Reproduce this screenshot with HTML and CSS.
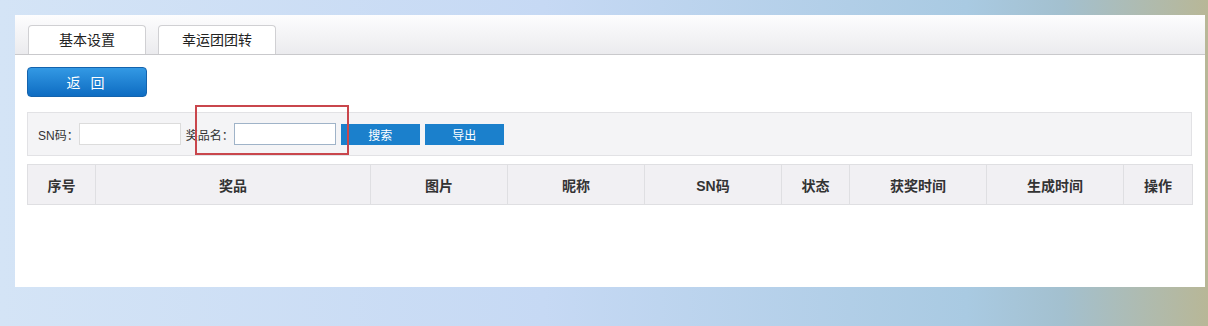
FILE: index.html
```html
<!DOCTYPE html>
<html lang="zh-CN">
<head>
    <meta charset="UTF-8">
    <meta name="viewport" content="width=device-width, initial-scale=1.0">
    <title>奖品列表</title>
    <link rel="stylesheet" href="styles.css">
</head>
<body>
    <div class="panel">
        <div class="tab-bar">
            <div class="tab">基本设置</div>
            <div class="tab">幸运团团转</div>
        </div>

        <div class="content">
            <button class="back-btn">返 回</button>

            <div class="search-bar">
                <label class="field-label">SN码：</label>
                <input class="field" type="text">
                <label class="field-label">奖品名：</label>
                <input class="field field-focus" type="text">
                <button class="small-btn">搜索</button>
                <button class="small-btn">导出</button>
                <div class="highlight"></div>
            </div>

            <table class="prize-table">
                <colgroup>
                    <col class="col-s">
                    <col class="col-xl">
                    <col class="col-m">
                    <col class="col-m">
                    <col class="col-m">
                    <col class="col-s">
                    <col class="col-m">
                    <col class="col-m">
                    <col class="col-last">
                </colgroup>
                <thead>
                    <tr>
                        <th>序号</th>
                        <th>奖品</th>
                        <th>图片</th>
                        <th>昵称</th>
                        <th>SN码</th>
                        <th>状态</th>
                        <th>获奖时间</th>
                        <th>生成时间</th>
                        <th>操作</th>
                    </tr>
                </thead>
            </table>
        </div>
    </div>
</body>
</html>
```

FILE: styles.css
```css
body {
    margin: 0;
    height: 326px;
    overflow: hidden;
    font-family: "Liberation Sans", "Noto Sans CJK SC", sans-serif;
    color: #333;
    background: linear-gradient(to right, #d4e4f6 0%, #c6d9f4 45%, #a9cae2 80%, #a3c0cf 88%, #b8b797 100%);
}
.panel {
    margin: 15px 3px 0 15px;
    height: 272px;
    background: #fff;
}
.tab-bar {
    height: 39px;
    border-bottom: 1px solid #c9c9cc;
    background: linear-gradient(to bottom, #fdfdfe, #ebebee);
    display: flex;
    align-items: flex-end;
    gap: 12px;
    padding-left: 13px;
    border-top-right-radius: 3px;
}
.tab {
    width: 116px;
    height: 28px;
    border: 1px solid #d0d0d3;
    border-bottom: none;
    border-radius: 4px 4px 0 0;
    background: #fff;
    font-size: 14px;
    line-height: 29px;
    text-align: center;
    color: #222;
}
.content {
    padding: 12px 13px 0 12px;
}
.back-btn {
    display: block;
    width: 120px;
    height: 30px;
    border: 1px solid #1463ad;
    border-radius: 4px;
    background: linear-gradient(to bottom, #3399e4, #0e6cc2);
    color: #fff;
    font-family: inherit;
    font-size: 14px;
    letter-spacing: 3px;
    padding: 0;
}
.search-bar {
    position: relative;
    margin-top: 15px;
    height: 42px;
    border: 1px solid #e2e2e5;
    background: #f4f4f6;
    display: flex;
    align-items: center;
    padding-left: 10px;
}
.field-label {
    font-size: 12px;
    color: #333;
}
.field {
    width: 98px;
    height: 18px;
    border: 1px solid #dcdcdc;
    padding: 1px;
    margin-right: 5px;
    background: #fff;
}
.field-focus {
    border-color: #9fb3c8;
    margin-right: 5px;
}
.small-btn {
    width: 79px;
    height: 21px;
    border: none;
    background: #1b80cc;
    color: #fff;
    font-family: inherit;
    font-size: 12px;
    margin-right: 5px;
    padding: 0;
}
.highlight {
    position: absolute;
    left: 167px;
    top: -8px;
    width: 150px;
    height: 46px;
    border: 2px solid #c9464c;
}
.prize-table {
    margin-top: 8px;
    width: 1165px;
    border-collapse: collapse;
    table-layout: fixed;
}
.prize-table th {
    height: 39px;
    border: 1px solid #dfdfe2;
    background: #f1f0f3;
    font-size: 14px;
    font-weight: bold;
    color: #333;
    padding: 0;
}
.col-s { width: 68px; }
.col-xl { width: 275px; }
.col-m { width: 137px; }
.col-last { width: 69px; }
```
